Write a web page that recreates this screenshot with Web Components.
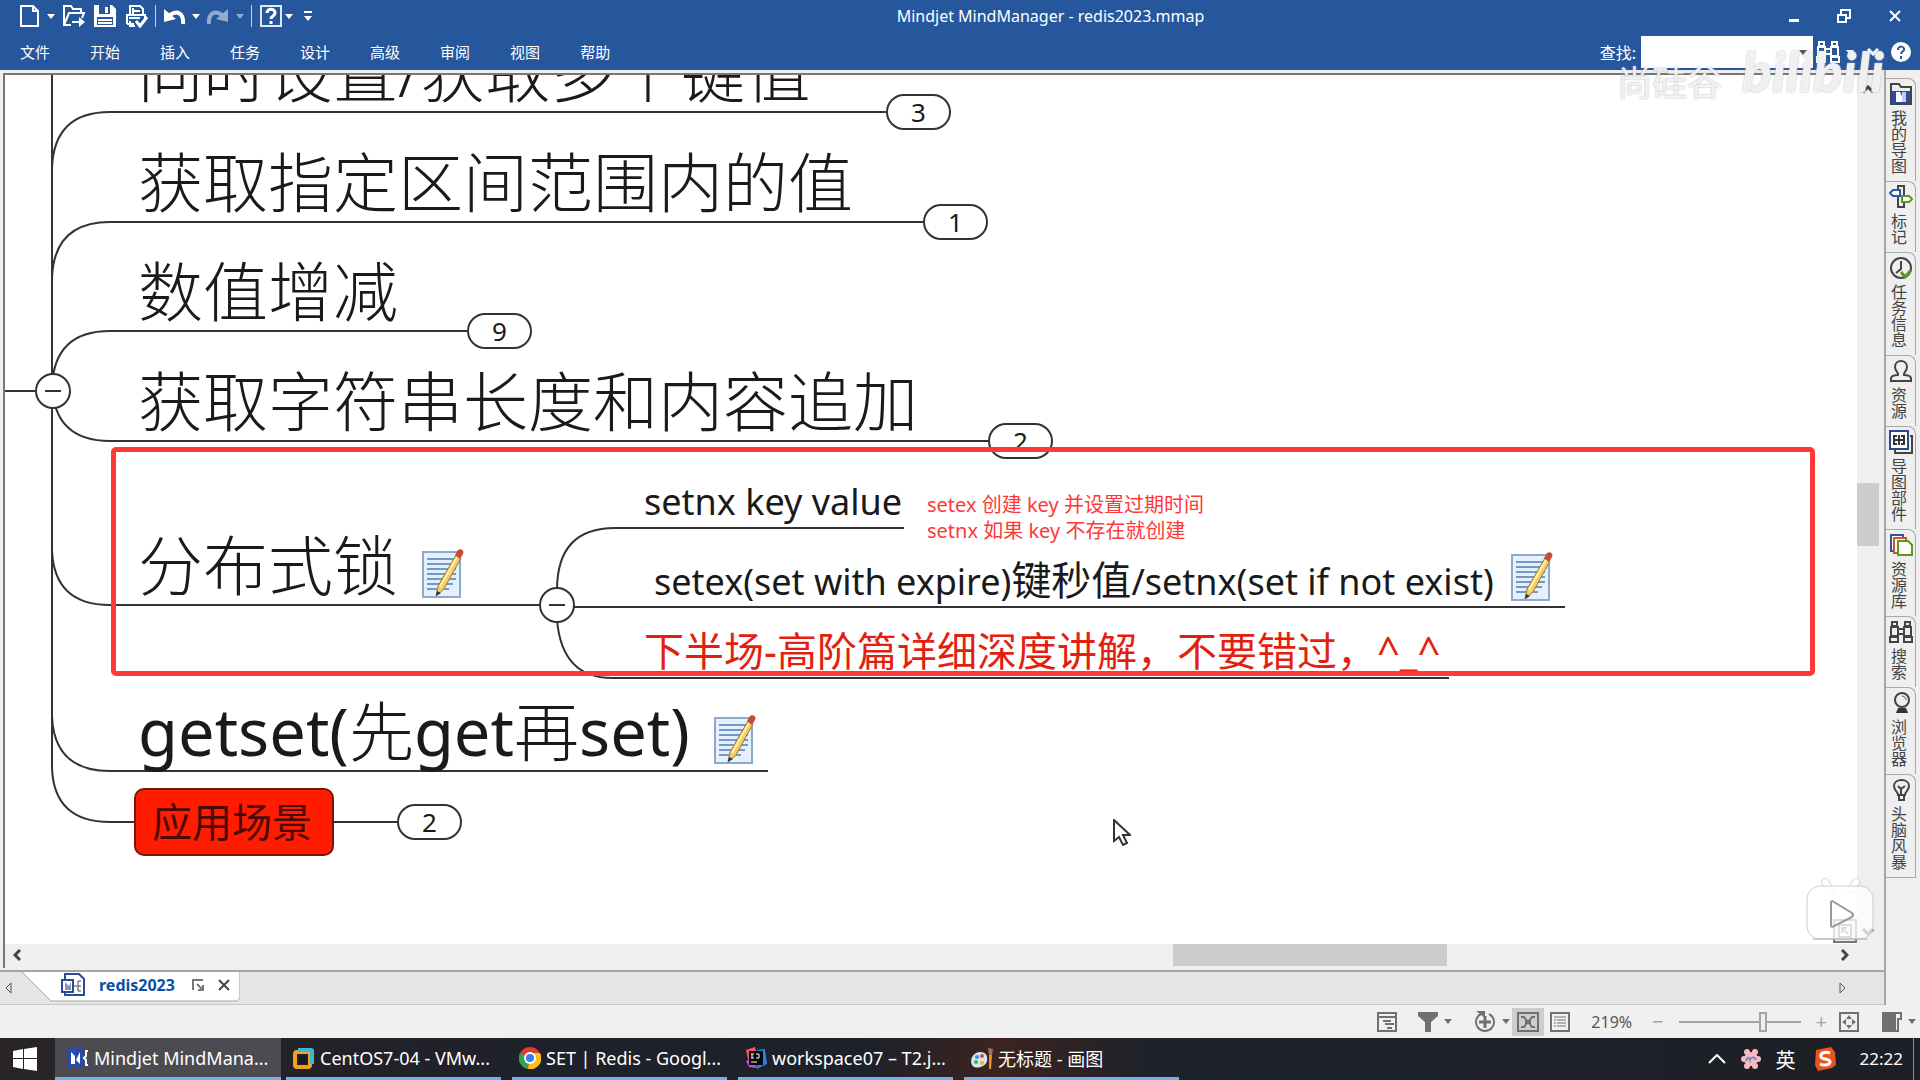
<!DOCTYPE html>
<html lang="zh-CN">
<head>
<meta charset="utf-8">
<title>Mindjet MindManager - redis2023.mmap</title>
<style>
  html, body { height: 100%; }
  body {
    margin: 0;
    overflow: hidden;
    font-family: "Noto Sans", "Noto Sans CJK SC", sans-serif;
    font-size: 16px;
    color: #1a1a1a;
    background: #efefef;
  }
</style>
</head>
<body>

<mm-window>
  <title-bar slot="title">Mindjet MindManager - redis2023.mmap</title-bar>
  <menu-bar slot="menu">
    <menu-item>文件</menu-item>
    <menu-item>开始</menu-item>
    <menu-item>插入</menu-item>
    <menu-item>任务</menu-item>
    <menu-item>设计</menu-item>
    <menu-item>高级</menu-item>
    <menu-item>审阅</menu-item>
    <menu-item>视图</menu-item>
    <menu-item>帮助</menu-item>
  </menu-bar>

  <mind-map slot="map">
    <map-topic style="left:134px;top:33px;width:752px" count="3">同时设置/获取多个键值</map-topic>
    <map-topic style="left:134px;top:143px;width:789px" count="1">获取指定区间范围内的值</map-topic>
    <map-topic style="left:134px;top:252px;width:333px" count="9">数值增减</map-topic>
    <map-topic style="left:134px;top:362px;width:854px" count="2">获取字符串长度和内容追加</map-topic>
    <map-topic style="left:134px;top:526px;width:406px" note>分布式锁</map-topic>
    <map-topic style="left:134px;top:692px;width:634px" note><span>getset(</span>先<span>get</span>再<span>set)</span></map-topic>
    <map-topic style="left:637px;top:477px;width:267px" class="sub">setnx key value</map-topic>
    <map-topic style="left:647px;top:556px;width:918px" class="sub" note>setex(set with expire)<big>键秒值</big>/setnx(set if not exist)</map-topic>
    <map-topic style="left:637px;top:627px;width:812px" class="sub red"><big>下半场-高阶篇详细深度讲解，不要错过，^_^</big></map-topic>
    <map-box style="left:134px;top:788px" count="2">应用场景</map-box>
    <fold-button style="left:35px;top:373px"></fold-button>
    <fold-button style="left:539px;top:587px"></fold-button>
    <map-remark style="left:927px;top:492px">setex 创建 key 并设置过期时间<br>setnx 如果 key 不存在就创建</map-remark>
  </mind-map>

  <side-bar slot="side">
    <side-tab icon="maps">我的导图</side-tab>
    <side-tab icon="marker">标记</side-tab>
    <side-tab icon="clock">任务信息</side-tab>
    <side-tab icon="person">资源</side-tab>
    <side-tab icon="parts">导图部件</side-tab>
    <side-tab icon="library">资源库</side-tab>
    <side-tab icon="binoc">搜索</side-tab>
    <side-tab icon="globe">浏览器</side-tab>
    <side-tab icon="bulb">头脑风暴</side-tab>
  </side-bar>

  <doc-tabs slot="tabs">redis2023</doc-tabs>
  <status-bar slot="status"></status-bar>
  <task-bar slot="taskbar">
    <task-item icon="mindjet" active>Mindjet MindMana...</task-item>
    <task-item icon="vmware">CentOS7-04 - VMw...</task-item>
    <task-item icon="chrome">SET | Redis - Googl...</task-item>
    <task-item icon="idea">workspace07 – T2.j...</task-item>
    <task-item icon="paint">无标题 - 画图</task-item>
  </task-bar>
</mm-window>
<water-mark></water-mark>

<script>
// every icon: [width, height, svg content]
const ICONS = {
  caret: [8, 5, '<path d="M0 0h8L4 5z" fill="currentColor"/>'],
  page: [21, 24, '<path d="M2 2h12l5 5v15H2zM14 2v5h5" fill="none" stroke="#fff" stroke-width="2"/>'],
  open: [24, 24, '<path d="M9 21H2V2h7l2 3h8v4M2 21l5-12h15l-2 5" fill="none" stroke="#fff" stroke-width="2"/><path d="M10 17h7v-4l6 5-6 5v-4h-7z" fill="#fff"/>'],
  save: [24, 24, '<path d="M1 1h18l4 4v18H1z" fill="#fff"/><path d="M6 1h11v9H6zM4 13h16v8H4z" fill="#26569c"/><path d="M12 3h3v6h-3zM5 15h14v2H5zM5 18h14v2H5z" fill="#fff"/>'],
  print: [24, 24, '<path d="M6 10V2h10l3 3v5M3 20V11h18v4M3 20h7M9 7h7M9 4v6M5 14h11M6 17v5h5" fill="none" stroke="#fff" stroke-width="2"/><path d="M12 17l4 5 7-9" fill="none" stroke="#fff" stroke-width="3"/>'],
  undo: [22, 18, '<path d="M20 17C21 6 14 3 7 8" fill="none" stroke="#fff" stroke-width="4"/><path d="M1 2v13l12-3z" fill="#fff"/>'],
  redo: [22, 18, '<g opacity=".5"><path d="M2 17C1 6 8 3 15 8" fill="none" stroke="#fff" stroke-width="4"/><path d="M21 2v13l-12-3z" fill="#fff"/></g>'],
  help: [24, 24, '<path d="M2 2h20v20H2z" fill="none" stroke="#dfe9f8" stroke-width="2"/><path d="M8 9c0-5 8-5 8 0 0 3-4 3-4 6M12 17v3" fill="none" stroke="#fff" stroke-width="3"/>'],
  more: [8, 10, '<path d="M0 0h8v2H0zM0 5h8L4 10z" fill="#fff"/>'],
  min: [10, 12, '<path d="M0 9h10v3H0z" fill="#fff"/>'],
  restore: [14, 14, '<path d="M1 6h8v7H1zM4 6V1h9v8H9" fill="none" stroke="#fff" stroke-width="2"/>'],
  close: [12, 12, '<path d="M1 1l10 10M11 1L1 11" stroke="currentColor" stroke-width="2"/>'],
  binoc: [24, 24, '<path d="M3 2h5v4H3zM16 2h5v4h-5zM2 7h7v9H2zM15 7h7v9h-7zM9 9h6M9 14h6M1 17h8v5H1zM15 17h8v5h-8z" fill="none" stroke="currentColor" stroke-width="2"/>'],
  chevdown: [12, 8, '<path d="M1 1l5 5 5-5" fill="none" stroke="currentColor" stroke-width="3"/>'],
  chevup: [12, 8, '<path d="M1 7l5-5 5 5" fill="none" stroke="currentColor" stroke-width="3"/>'],
  chevleft: [8, 12, '<path d="M7 1L2 6l5 5" fill="none" stroke="currentColor" stroke-width="3"/>'],
  chevright: [8, 12, '<path d="M1 1l5 5-5 5" fill="none" stroke="currentColor" stroke-width="3"/>'],
  round: [20, 20, '<circle cx="10" cy="10" r="10" fill="#fff"/><path d="M7 8c0-5 7-4 6 0-1 2-3 2-3 4M10 14v3" fill="none" stroke="#26569c" stroke-width="2"/>'],
  maps: [24, 24, '<path d="M2 22V2h8l2 3h10v17z" fill="#eee" stroke="#444" stroke-width="2"/><path d="M3 9h18v12H3z" fill="#2d4ba5"/><path d="M7 10h4l2 4v6H7z" fill="#fff"/><path d="M13 10h4v10h-4z" fill="#c5cdee"/>'],
  marker: [24, 24, '<path d="M9 1h6v21H9z" fill="#eee" stroke="#444" stroke-width="2"/><path d="M1 8l3-3h7v6H4z" fill="#fff" stroke="#2a59a8" stroke-width="2"/><path d="M23 14l-3-3h-7v6h7z" fill="#fff" stroke="#5c9820" stroke-width="2"/>'],
  clock: [24, 24, '<circle cx="12" cy="12" r="10" fill="none" stroke="#444" stroke-width="2"/><path d="M12 5v8l-5 4" fill="none" stroke="#444" stroke-width="2"/><path d="M12 16l4 5 6-7" fill="none" stroke="#5c9820" stroke-width="3"/>'],
  person: [24, 24, '<path d="M2 22v-3q1-3 7-3c1-2-3-4-3-8 0-8 12-8 12 0 0 4-4 6-3 8q6 0 7 3v3z" fill="none" stroke="#444" stroke-width="2"/>'],
  parts: [24, 24, '<path d="M21 6h2v17H6v-3" fill="none" stroke="#444" stroke-width="2"/><path d="M1 1h18v18H1z" fill="#fff" stroke="#2a4a8c" stroke-width="2"/><path d="M10 5v10M4 10h12M8 6H5v8h3M12 6h3v8h-3" fill="none" stroke="#333" stroke-width="2"/>'],
  library: [24, 24, '<path d="M2 2h12v16H2z" fill="#fff" stroke="#35509f" stroke-width="2"/><path d="M5 5h12v15H5z" fill="#fff" stroke="#d2502c" stroke-width="2"/><path d="M9 8h10l4 4v10H9z" fill="#fff" stroke="#5c9820" stroke-width="2"/>'],
  globe: [24, 24, '<circle cx="13" cy="9" r="7" fill="none" stroke="#444" stroke-width="2"/><path d="M13 5c2 0 4 2 4 4" fill="none" stroke="#444"/><path d="M9 17h8l2 5H7z" fill="#333"/>'],
  bulb: [24, 24, '<path d="M9 17c0-4-4-4-4-9 0-8 15-8 15 0 0 5-4 5-4 9zM10 17v5h5v-5M9 8l3 3v5M16 8l-4 3" fill="none" stroke="#444" stroke-width="2"/>'],
  note: [42, 50, '<path d="M1 3h37v45H1z" fill="#e4f0fb" stroke="#8da9cc" stroke-width="2"/><path d="M5 10h29M5 15h29M5 20h29M5 25h29M5 30h29M5 35h26M5 40h22" stroke="#7499c8" stroke-width="2"/><path d="M14 47l2-10L34 6l5 3-17 31z" fill="#f3cd67" stroke="#9c7730"/><path d="M18 38L35 8" stroke="#fff0a8" stroke-width="2"/><path d="M33 6l3-5c2-2 7 0 5 4l-3 5z" fill="#c94a38"/><path d="M14 47l1-5 4 2z" fill="#333"/>'],
  outline: [20, 20, '<path d="M1 1h18v18H1zM1 5h18" fill="none" stroke="currentColor" stroke-width="2"/><path d="M6 9h8M8 12h9M10 16h5" stroke="currentColor" stroke-width="2"/>'],
  filter: [20, 20, '<path d="M0 0h20v4l-7 6v10H7V10L0 4z" fill="currentColor"/>'],
  target: [24, 24, '<path d="M8 4a9 9 0 1 0 8 0" fill="none" stroke="currentColor" stroke-width="2"/><path d="M6 12h12M12 6v12" stroke="currentColor" stroke-width="3"/><path d="M3 1h9v7z" fill="currentColor"/>'],
  mapview: [22, 20, '<path d="M1 1h20v18H1z" fill="none" stroke="currentColor" stroke-width="2"/><path d="M8 8h6v4H8z" fill="currentColor"/><path d="M4 5h3l3 4M18 5h-3l-3 4M4 15h3l3-4M18 15h-3l-3-4" fill="none" stroke="currentColor" stroke-width="2"/>'],
  list: [20, 20, '<path d="M1 1h18v18H1z" fill="none" stroke="currentColor" stroke-width="2"/><path d="M4 5h12M7 8h9M7 11h9M7 14h9M4 8h2M4 11h2M4 14h2" stroke="currentColor" stroke-width="1"/>'],
  fit: [20, 20, '<path d="M1 1h18v18H1z" fill="none" stroke="currentColor" stroke-width="2"/><path d="M10 3l3 4H7zM10 17l3-4H7zM3 10l4-3v6zM17 10l-4-3v6z" fill="currentColor"/>'],
  panel: [20, 20, '<path d="M0 0h12v20H0z" fill="currentColor"/><path d="M13 1h6v6h-3v12h-3z" fill="none" stroke="currentColor" stroke-width="2"/>'],
  doc: [24, 24, '<path d="M4 1h14l5 5v16H4z" fill="#fff" stroke="#2c4a9a" stroke-width="2"/><path d="M1 7h11v12H1z" fill="#fff" stroke="#2c4a9a" stroke-width="2"/><path d="M4 9l4 4 2-4v8H4z" fill="#8c96b8"/><path d="M13 13h3M20 8h-3v10h3M17 13h3" fill="none" stroke="#444" stroke-width="1"/>'],
  restoredoc: [12, 12, '<path d="M1 11V1h10M11 6v5H6M5 5l5 5" fill="none" stroke="#777" stroke-width="2"/>'],
  left: [7, 12, '<path d="M6 1v10L1 6z" fill="none" stroke="#555"/>'],
  right: [7, 12, '<path d="M1 1v10l5-5z" fill="none" stroke="#555"/>'],
  win: [24, 24, '<path d="M0 4l10-2v9H0zM11 2l13-2v11H11zM0 12h10v10L0 20zM11 12h13v12l-13-2z" fill="#fff"/>'],
  mindjet: [22, 22, '<path d="M0 1h17v20H0z" fill="#2a4aa8"/><path d="M4 5l4 4v8H4zM13 5v12l-4-4z" fill="#fff"/><path d="M21 4h-2v5l-2 2 2 2v5h2" fill="none" stroke="#fff" stroke-width="2"/>'],
  vmware: [22, 22, '<rect x="2" y="5" width="15" height="15" rx="2" fill="none" stroke="#f2a21c" stroke-width="4"/><path d="M5 1h13q3 0 3 3v13h-4V5H5z" fill="#43b3d6"/><path d="M6 9h8v8H6z" fill="#101c28"/>'],
  chrome: [22, 22, '<circle cx="11" cy="11" r="11" fill="#e33b2e"/><path d="M11 11L1 6a11 11 0 0 0 8 16z" fill="#2ea44f"/><path d="M11 11h0L9 22A11 11 0 0 0 21 6H11z" fill="#fbc116"/><circle cx="11" cy="11" r="6" fill="#fff"/><circle cx="11" cy="11" r="4" fill="#3b7de8"/>'],
  idea: [22, 22, '<path d="M1 3l9-3 2 8-8 9z" fill="#f2536b"/><path d="M12 3l8-1 2 15-10 5z" fill="#2a7df0"/><path d="M1 14l7-4 4 11-8-1z" fill="#c34de0"/><path d="M4 4h14v14H4z" fill="#080808"/><path d="M6 7h3M7 7v4M6 11h3M11 7h3v4h-3M6 15h6" stroke="#fff" fill="none"/>'],
  paint: [22, 22, '<path d="M9 5c6 0 8 4 7 9-1 6-12 9-15 4-3-6 2-13 8-13z" fill="#d3e6f4"/><circle cx="6" cy="10" r="2" fill="#3b8fe0"/><circle cx="11" cy="9" r="2" fill="#e34c36"/><circle cx="5" cy="15" r="2" fill="#4cad45"/><circle cx="11" cy="16" r="2" fill="#f0b429"/><path d="M18 8h3l-1 14h-2z" fill="#e9962c"/><path d="M17 1l5 1-1 6h-3z" fill="#9b7650"/>'],
  flower: [22, 22, '<g fill="#f7bcc0"><circle cx="7" cy="4" r="3"/><circle cx="15" cy="4" r="3"/><circle cx="18" cy="11" r="3"/><circle cx="15" cy="18" r="3"/><circle cx="7" cy="18" r="3"/><circle cx="4" cy="11" r="3"/><circle cx="11" cy="11" r="7"/></g><path d="M6 13c1-4 3-4 4-1 1-3 4-4 6 0" fill="none" stroke="#6d8ec4" stroke-width="2"/>'],
  sogou: [22, 24, '<path d="M2 3l15-3 4 5 1 13-4 3-14 3-3-6z" fill="#e8541c"/><path d="M16 6C11 4 6 6 7 10c1 3 9 1 9 5 0 3-6 4-10 2" fill="none" stroke="#fff" stroke-width="3"/>'],
  tray: [18, 10, '<path d="M1 9l8-8 8 8" fill="none" stroke="#fff" stroke-width="2"/>'],
  corner: [24, 24, '<path d="M1 1h22v22H1z" fill="#eee" stroke="#777" stroke-width="2"/><path d="M6 6h12v12H6z" fill="#fff" stroke="#777" stroke-width="2"/><path d="M9 9l6 6M9 14V9h5" fill="none" stroke="#777" stroke-width="2"/>'],
  cursor: [18, 28, '<path d="M1 1v21l5-4 4 8 4-2-4-8h7z" fill="#fff" stroke="#333" stroke-width="2"/>'],
  tv: [70, 70, '<path d="M20 10l5 7M51 10l-5 7" stroke="#d8d8d8" stroke-width="8" stroke-linecap="round"/><path d="M20 10l5 7M51 10l-5 7" stroke="#fff" stroke-width="6" stroke-linecap="round"/><rect x="2" y="14" width="66" height="53" rx="13" fill="#fff" fill-opacity=".75" stroke="#cfcfcf"/><path d="M8 67h54" stroke="#aaa" stroke-linecap="round"/><path d="M26 31q0-3 3-1l18 11q2 2 0 4L29 54q-3 2-3-1z" fill="none" stroke="#999" stroke-width="2"/>']
};

const icon = name => {
  const [w, h, body] = ICONS[name];
  return `<svg class="icon" width="${w}" height="${h}" viewBox="0 0 ${w} ${h}" aria-hidden="true">${body}</svg>`;
};

const BASE = `
  * { box-sizing: border-box; }
  button { margin: 0; padding: 0; border: 0; background: none; font: inherit; color: inherit; }
  svg { display: block; flex: none; }
`;

function define(name, render) {
  customElements.define(name, class extends HTMLElement {
    connectedCallback() {
      this.attachShadow({ mode: 'open' }).innerHTML = `<style>${BASE}</style>` + render(this);
    }
  });
}

define('mm-window', () => `
  <style>
    :host { display: flex; flex-direction: column; height: 100vh; }
    .head { background: #26569c; color: #fff; }
    .body { flex: 1; display: grid; grid-template-columns: 1fr 34px; min-height: 0; }
    .main { display: flex; flex-direction: column; min-width: 0; border-right: 2px solid #a5a5a5; }
  </style>
  <header class="head"><slot name="title"></slot><slot name="menu"></slot></header>
  <div class="body">
    <div class="main"><slot name="map"></slot><slot name="tabs"></slot></div>
    <slot name="side"></slot>
  </div>
  <slot name="status"></slot>
  <slot name="taskbar"></slot>
`);

define('title-bar', () => `
  <style>
    :host { display: grid; grid-template-columns: auto 1fr auto; align-items: center; height: 32px; padding: 0 19px; }
    .tools { display: flex; align-items: center; gap: 7px; }
    .tools button { display: flex; align-items: center; }
    .pair { gap: 7px; }
    .tight { gap: 2px; margin-right: 4px; }
    .dim { color: #93abd0; }
    i { width: 1px; height: 22px; background: #c9d6ea; }
    h1 { margin: 0; font-size: 16px; font-weight: 400; line-height: 32px; text-align: center; }
    .win { display: flex; justify-content: flex-end; align-items: center; gap: 38px; }
  </style>
  <div class="tools">
    <button class="pair" aria-label="新建">${icon('page')}${icon('caret')}</button>
    <button aria-label="打开">${icon('open')}</button>
    <button aria-label="保存">${icon('save')}</button>
    <button aria-label="打印">${icon('print')}</button>
    <i></i>
    <button class="pair" aria-label="撤消">${icon('undo')}${icon('caret')}</button>
    <button class="pair dim" aria-label="恢复">${icon('redo')}${icon('caret')}</button>
    <i></i>
    <button class="tight" aria-label="帮助">${icon('help')}${icon('caret')}</button>
    <button aria-label="自定义">${icon('more')}</button>
  </div>
  <h1><slot></slot></h1>
  <div class="win">
    <button aria-label="最小化">${icon('min')}</button>
    <button aria-label="还原">${icon('restore')}</button>
    <button aria-label="关闭">${icon('close')}</button>
  </div>
`);

define('menu-bar', () => `
  <style>
    :host { display: flex; justify-content: space-between; align-items: center; height: 36px; padding: 2px 9px 0 20px; }
    nav { display: flex; gap: 40px; }
    .find { display: flex; align-items: center; }
    .field { display: flex; align-items: center; margin: 0 3px 0 5px; width: 172px; height: 32px; padding-right: 6px; background: #fff; color: #555; }
    input { flex: 1; min-width: 0; height: 28px; border: 0; outline: 0; background: none; font: inherit; }
    button { display: flex; align-items: center; gap: 6px; }
    .chev { margin: 0 12px 0 13px; }
  </style>
  <nav><slot></slot></nav>
  <div class="find">
    <label for="q">查找:</label>
    <div class="field"><input id="q" type="text">${icon('caret')}</div>
    <button aria-label="查找">${icon('binoc')}${icon('caret')}</button>
    <button class="chev" aria-label="折叠功能区">${icon('chevdown')}</button>
    <button aria-label="帮助">${icon('round')}</button>
  </div>
`);

define('menu-item', () => `
  <style>
    :host { display: block; }
    button { font-size: 15px; line-height: 36px; }
  </style>
  <button><slot></slot></button>
`);

// the surface is scrolled, so its origin lies outside of the view
define('mind-map', () => `
  <style>
    :host { flex: 1; display: grid; grid-template: 1fr 24px / 1fr 22px; min-height: 0; margin: 3px 5px 2px 3px; background: #efefef;
      border: solid #777; border-width: 2px 0 0 2px; }
    .view { position: relative; overflow: hidden; background: #fff; }
    .surface { position: absolute; left: -5px; top: -75px; width: 1860px; height: 1024px; }
    .lines { position: absolute; inset: 0; }
    .frame { position: absolute; left: 111px; top: 447px; width: 1704px; height: 229px; border: 5px solid #ff3838; border-radius: 5px; }
    .cursor { position: absolute; left: 1113px; top: 819px; }
    .v, .h { display: flex; align-items: center; justify-content: space-between; color: #444; }
    .v { flex-direction: column; padding: 10px 0 8px; }
    .h { padding: 0 8px 2px; }
    .track { flex: 1; display: flex; align-self: stretch; }
    .v .track { flex-direction: column; }
    .thumb { background: #cdcdcd; }
    .v .gap { flex: 385; } .v .thumb { flex: 62; } .v .rest { flex: 377; }
    .h .gap { flex: 1151; } .h .thumb { flex: 273; } .h .rest { flex: 394; }
  </style>
  <div class="view">
    <div class="surface">
      <svg class="lines" width="1860" height="1024" fill="none" stroke="#333" stroke-width="2">
        <path d="M52 70V768Q54 822 110 822H134M5 391H35"/>
        <path d="M52 168Q54 112 110 112H134M52 278Q54 222 110 222H134M52 387Q54 331 110 331H134M52 385Q54 441 110 441H134"/>
        <path d="M52 550Q54 605 110 605H134M52 716Q54 771 110 771H134"/>
        <path d="M557 590Q557 528 615 528H637M570 607H647M557 620Q562 678 612 678H637"/>
        <path d="M334 822H398"/>
      </svg>
      <slot></slot>
      <div class="frame"></div>
      <div class="cursor">${icon('cursor')}</div>
    </div>
  </div>
  <div class="v">${icon('chevup')}<div class="track"><div class="gap"></div><div class="thumb"></div><div class="rest"></div></div>${icon('chevdown')}</div>
  <div class="h">${icon('chevleft')}<div class="track"><div class="gap"></div><div class="thumb"></div><div class="rest"></div></div>${icon('chevright')}</div>
`);

const BADGE = `
  .count { position: absolute; left: 100%; width: 65px; height: 36px; border: 2px solid #333; border-radius: 18px;
    background: #fff; color: #1a1a1a; font-size: 26px; line-height: 30px; text-align: center; font-weight: 400; }
`;

define('map-topic', el => `
  <style>
    ${BADGE}
    :host { position: absolute; display: flex; align-items: center; gap: 24px; box-sizing: border-box;
      height: 80px; padding-left: 4px; border-bottom: 2px solid #333; font-size: 65px; line-height: 78px; font-weight: 300; white-space: nowrap; }
    :host(.sub) { gap: 17px; height: 52px; padding-left: 7px; font-size: 36px; line-height: 50px; font-weight: 400; }
    :host(.red) { color: #e51f0f; }
    ::slotted(span) { font-weight: 400; }
    ::slotted(big) { font-size: 40px; }
    .note { margin-top: 18px; }
    :host(.sub) .note { margin: 0 0 8px; }
    .count { bottom: -19px; }
  </style>
  <div><slot></slot></div>
  ${el.hasAttribute('note') ? `<button class="note" aria-label="备注">${icon('note')}</button>` : ''}
  ${el.hasAttribute('count') ? `<button class="count">${el.getAttribute('count')}</button>` : ''}
`);

define('map-box', el => `
  <style>
    ${BADGE}
    :host { position: absolute; display: block; box-sizing: border-box; padding: 0 20px 0 16px; border: 2px solid #7c1408; border-radius: 10px;
      background: #ff1c00; color: #4c0a04; font-size: 40px; line-height: 64px; }
    .count { margin-left: 65px; top: 14px; }
  </style>
  <slot></slot>
  <button class="count">${el.getAttribute('count')}</button>
`);

define('fold-button', () => `
  <style>
    :host { position: absolute; }
    button { display: grid; place-items: center; width: 36px; height: 36px; border: 2px solid #333; border-radius: 50%; background: #fff; }
    button::before { content: ""; width: 16px; height: 2px; background: #333; }
  </style>
  <button aria-label="折叠"></button>
`);

define('map-remark', () => `
  <style>
    :host { position: absolute; color: #ff3838; font-size: 20px; line-height: 26px; white-space: nowrap; }
  </style>
  <slot></slot>
`);

define('side-bar', () => `
  <style>
    :host { display: block; padding: 8px 4px 0 0; background: #efefef; }
  </style>
  <slot></slot>
`);

define('side-tab', el => `
  <style>
    :host { display: block; border: 1px solid #a8a8a8; border-left: 0; border-bottom: 0; border-radius: 0 8px 0 0; }
    :host(:last-child) { border-bottom: 1px solid #a8a8a8; }
    button { display: flex; flex-direction: column; align-items: center; gap: 4px; width: 100%; padding: 3px 0 7px; color: #444; }
    span { align-self: flex-start; font-size: 16px; line-height: 24px; writing-mode: vertical-rl; text-orientation: upright; }
  </style>
  <button>${icon(el.getAttribute('icon'))}<span><slot></slot></span></button>
`);

define('doc-tabs', () => `
  <style>
    :host { display: flex; align-items: stretch; height: 35px; background: #e5e5e5; border-top: 2px solid #a5a5a5; border-bottom: 1px solid #c4c4c4; box-sizing: border-box; }
    .nav { display: flex; align-items: center; padding: 0 5px; }
    .nav.next { margin: 0 33px 0 auto; }
    .tab { position: relative; display: flex; align-items: center; gap: 14px; padding: 0 10px 4px 39px; height: 30px; margin-left: 5px; }
    .shape { position: absolute; inset: 0; }
    .tab > :not(.shape) { position: relative; }
    a { margin-right: 3px; color: #0b50a8; font-size: 16px; line-height: 24px; font-weight: 700; text-decoration: none; }
    button { color: #444; }
  </style>
  <button class="nav" aria-label="上一个">${icon('left')}</button>
  <div class="tab">
    <svg class="shape" width="100%" height="30" viewBox="0 0 218 30" preserveAspectRatio="none"><path d="M0 0l29 29h186l3-3V0" fill="#fff" stroke="#a5a5a5"/></svg>
    ${icon('doc')}
    <a href="#redis2023"><slot></slot></a>
    <button aria-label="还原窗口">${icon('restoredoc')}</button>
    <button aria-label="关闭文档">${icon('close')}</button>
  </div>
  <button class="nav next" aria-label="下一个">${icon('right')}</button>
`);

define('status-bar', () => `
  <style>
    :host { display: flex; justify-content: flex-end; align-items: center; height: 33px; padding-right: 4px; background: #f0f0f0; color: #707070; }
    button { display: flex; align-items: center; justify-content: center; gap: 6px; height: 28px; }
    .caret { margin-right: 21px; }
    .focus { gap: 5px; margin-right: 11px; }
    .on { width: 32px; margin-left: -9px; margin-right: 6px; background: #cdcdcd; }
    output { margin: 0 20px 0 21px; font-size: 16px; color: #555; }
    input { appearance: none; width: 122px; height: 20px; margin: 0 15px; background: linear-gradient(#a5a5a5, #a5a5a5) center / 100% 2px no-repeat; }
    input::-webkit-slider-thumb { appearance: none; width: 8px; height: 20px; border: 2px solid #a5a5a5; background: #efefef; }
    .sign { font-size: 20px; color: #a5a5a5; }
    .fit { margin: 0 23px 0 12px; }
  </style>
  <button class="caret" aria-label="大纲">${icon('outline')}</button>
  <button class="caret" aria-label="筛选">${icon('filter')}${icon('caret')}</button>
  <button class="focus" aria-label="聚焦">${icon('target')}${icon('caret')}</button>
  <button class="on" aria-label="导图视图">${icon('mapview')}</button>
  <button aria-label="大纲视图">${icon('list')}</button>
  <output for="zoom">219%</output>
  <button class="sign" aria-label="缩小">−</button>
  <input id="zoom" type="range" min="0" max="100" value="71" aria-label="缩放">
  <button class="sign" aria-label="放大">+</button>
  <button class="fit" aria-label="适合窗口">${icon('fit')}</button>
  <button aria-label="面板">${icon('panel')}${icon('caret')}</button>
`);

define('task-bar', () => `
  <style>
    :host { display: flex; height: 42px; background: linear-gradient(90deg, #292426, #20212a 25%, #1d212b 45%, #3b241f 52%, #1e222c 60%, #1d1f26); color: #fff; }
    .start { display: grid; place-items: center; width: 55px; padding-right: 6px; }
    .tray { display: flex; align-items: center; gap: 14px; margin-left: auto; padding-right: 6px; }
    .lang { margin-right: 4px; font-size: 20px; }
    .tray time { margin-left: 10px; padding-right: 10px; border-right: 1px solid #888; font-size: 17px; line-height: 42px; }
  </style>
  <button class="start" aria-label="开始">${icon('win')}</button>
  <slot></slot>
  <div class="tray">
    <button aria-label="显示隐藏的图标">${icon('tray')}</button>
    <button aria-label="输入法皮肤">${icon('flower')}</button>
    <button class="lang">英</button>
    <button aria-label="搜狗输入法">${icon('sogou')}</button>
    <time>22:22</time>
  </div>
`);

define('task-item', el => `
  <style>
    :host { display: block; width: 226px; padding: 0 6px 0 5px; box-sizing: border-box; }
    button { display: flex; align-items: center; gap: 5px; width: 100%; height: 42px; padding: 1px 0 0 7px; border-bottom: 3px solid #76b0ea; font-size: 18px; white-space: nowrap; }
    :host([active]) { padding: 0; }
    :host([active]) button { padding-left: 12px; background: #4c4b51; }
  </style>
  <button>${icon(el.getAttribute('icon'))}<slot></slot></button>
`);

define('water-mark', () => `
  <style>
    :host { position: absolute; inset: 0; pointer-events: none; overflow: hidden; color: rgba(255, 255, 255, .82); text-shadow: 0 0 2px #aaa; }
    .top { position: absolute; top: 27px; right: 36px; display: flex; align-items: center; gap: 20px; line-height: 64px; }
    .name { padding-top: 24px; font-size: 35px; }
    .brand { font: italic 900 55px/64px Lato, sans-serif; }
    .corner { position: absolute; right: 63px; top: 919px; }
    .tv { position: absolute; right: 45px; top: 872px; }
  </style>
  <div class="top"><span class="name">尚硅谷</span><span class="brand">bilibili</span></div>
  <div class="corner">${icon('corner')}</div>
  <div class="tv">${icon('tv')}</div>
`);
</script>
</body>
</html>
